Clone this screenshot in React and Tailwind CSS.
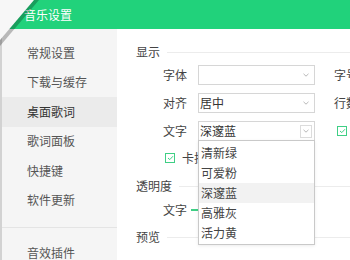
import React from 'react';

const font = { fontFamily: '"Noto Sans CJK SC", "Noto Sans", sans-serif' };

const navItems = ['常规设置', '下载与缓存', '桌面歌词', '歌词面板', '快捷键', '软件更新'];
const colors = ['清新绿', '可爱粉', '深邃蓝', '高雅灰', '活力黄'];

function Caret({ boxed }) {
  return (
    <span className={`flex items-center justify-center w-[12px] h-[13px] ${boxed ? 'border border-[#dcdcdc]' : ''}`}>
      <svg width="6" height="4" viewBox="0 0 6 4">
        <path d="M0.5 0.8 L3 3.2 L5.5 0.8" fill="none" stroke="#b8b8b8" strokeWidth="1" />
      </svg>
    </span>
  );
}

function Select({ value, boxed }) {
  return (
    <div className="w-[117px] h-[20px] shrink-0 border border-[#d6d6d6] bg-white flex items-center justify-between pl-[1px] pr-[2px] text-[12px] text-[#333]">
      <span>{value}</span>
      <Caret boxed={boxed} />
    </div>
  );
}

function Check() {
  return (
    <span className="w-[10px] h-[10px] shrink-0 border border-[#3fcf85] flex items-center justify-center bg-white">
      <svg width="7" height="6" viewBox="0 0 7 6">
        <path d="M1 3 L2.8 4.6 L6 1.2" fill="none" stroke="#3fcf85" strokeWidth="1" />
      </svg>
    </span>
  );
}

function SectionTitle({ children }) {
  return (
    <div className="flex items-center h-[16px] text-[12px] text-[#444] whitespace-nowrap">
      <span>{children}</span>
      <span className="flex-1 ml-[7px] border-t border-[#ececec]" />
    </div>
  );
}

function Row({ label, children, right }) {
  return (
    <div className="flex items-center h-[20px] pl-[27px] text-[12px] text-[#444] whitespace-nowrap">
      <span className="w-[24px] shrink-0">{label}</span>
      <div className="ml-[11px] shrink-0">{children}</div>
      {right && <div className="ml-[19px] shrink-0 flex items-center">{right}</div>}
    </div>
  );
}

export default function App() {
  return (
    <div className="relative w-[350px] h-[260px] overflow-hidden bg-white" style={font}>
      {/* title bar */}
      <div className="h-[29px] bg-[#21d27b] flex items-center pl-[24px] text-[12px] text-white">
        音乐设置
      </div>

      <div className="flex h-[231px]">
        {/* sidebar */}
        <div className="w-[117px] shrink-0 bg-[#f5f5f5] border-l-2 border-[#d2d2d2] pt-[9px] text-[12px] text-[#555]">
          {navItems.map((item) => (
            <div
              key={item}
              className={`h-[29.5px] flex items-center pl-[25px] ${item === '桌面歌词' ? 'bg-[#ebebeb] text-[#333]' : ''}`}
            >
              {item}
            </div>
          ))}
          <div className="mt-[12px] border-t border-[#e4e4e4] pt-[17px] pl-[25px] leading-[16px]">音效插件</div>
        </div>

        {/* content */}
        <div className="flex-1 min-w-0 pl-[19px] pt-[15px]">
          <SectionTitle>显示</SectionTitle>
          <div className="mt-[5px] flex flex-col gap-[8px]">
            <Row label="字体" right={<span>字号</span>}>
              <Select value="" />
            </Row>
            <Row label="对齐" right={<span>行数</span>}>
              <Select value="居中" />
            </Row>
            <Row label="文字" right={<span className="ml-[3px]"><Check /></span>}>
              <Select value="深邃蓝" boxed />
            </Row>
          </div>
          <div className="mt-[7px] h-[20px] flex items-center pl-[29px] text-[12px] text-[#444] whitespace-nowrap">
            <Check />
            <span className="ml-[7px]">卡拉OK效果</span>
          </div>
          <div className="mt-[10px]">
            <SectionTitle>透明度</SectionTitle>
          </div>
          <div className="mt-[6px] h-[20px] flex items-center pl-[27px] text-[12px] text-[#444] whitespace-nowrap">
            <span>文字</span>
            <span className="ml-[4px] w-[100px] h-[2px] bg-[#3fcf85]" />
          </div>
          <div className="mt-[9px]">
            <SectionTitle>预览</SectionTitle>
          </div>
        </div>
      </div>

      {/* open dropdown */}
      <div className="absolute left-[198px] top-[140px] w-[117px] h-[105px] bg-white border border-[#c9c9c9] shadow-[0_1px_3px_rgba(0,0,0,0.08)] pt-[2px] text-[12px] text-[#444]">
        {colors.map((c) => (
          <div key={c} className={`h-[20px] flex items-center pl-[2px] ${c === '深邃蓝' ? 'bg-[#f2f2f2]' : ''}`}>
            {c}
          </div>
        ))}
      </div>

      {/* folded corner */}
      <svg className="absolute left-0 top-0" width="50" height="50" viewBox="0 0 50 50">
        <defs>
          <linearGradient id="sh" x1="0" y1="0" x2="1" y2="1">
            <stop offset="0.5" stopColor="#000" stopOpacity="0.25" />
            <stop offset="1" stopColor="#000" stopOpacity="0" />
          </linearGradient>
        </defs>
        <polygon points="0,0 39,0 0,46" fill="url(#sh)" />
        <polygon points="0,0 34,0 0,40" fill="#f7f7f7" />
      </svg>
    </div>
  );
}
